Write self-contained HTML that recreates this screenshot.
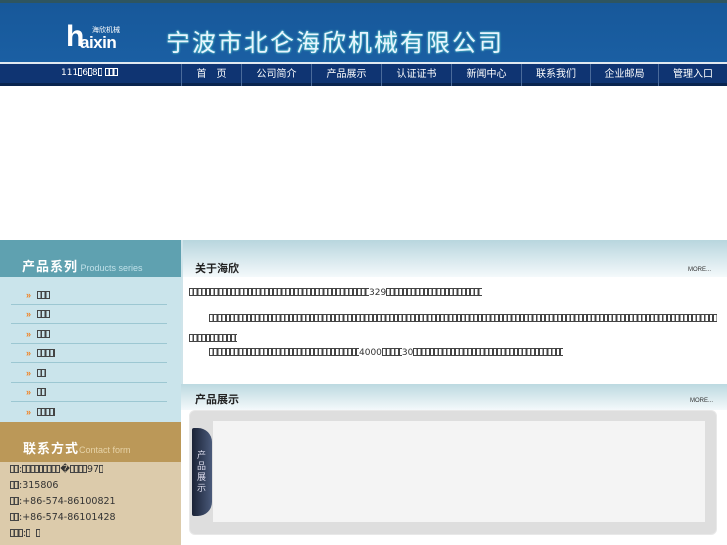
<!DOCTYPE html>
<html><head><meta charset="utf-8"><style>
*{margin:0;padding:0;box-sizing:border-box}
body{width:727px;height:545px;overflow:hidden;background:#fff;font-family:"Liberation Sans","Noto Sans CJK SC",sans-serif;position:relative}
.a{position:absolute}
.t{display:inline-block;height:8px;vertical-align:-1px;border-top:1px solid #444;border-bottom:1px solid #444;background:repeating-linear-gradient(90deg,#444 0 1px,transparent 1px 3.4px,#444 3.4px 4.2px)}
.w{border-color:#fff;background:repeating-linear-gradient(90deg,#fff 0 1px,transparent 1px 3.4px,#fff 3.4px 4.2px)}
.nav span.n{position:absolute;top:0;height:22px;line-height:22px;color:#fff;font-size:10px;text-align:center;border-left:1px solid #4a6a9a}
.li{position:absolute;left:11px;width:156px;height:19px;border-bottom:1px solid #9cc7d2;font-size:10px}
.li b{position:absolute;left:15px;top:4px;color:#f08020;font-size:9px}
.li .t{position:absolute;left:26px;top:5px}
.ct{position:absolute;left:10px;font-size:9.5px;color:#333;font-family:"DejaVu Sans",sans-serif}
</style></head><body>
<div class="a" style="left:0;top:0;width:727px;height:3px;background:#2e5560"></div>
<div class="a" style="left:0;top:3px;width:727px;height:59px;background:linear-gradient(#17589a,#1a5fa3)"></div>
<div class="a" style="left:66px;top:22px;color:#fff;font:bold 30px 'Liberation Sans',sans-serif;line-height:30px">h</div>
<div class="a" style="left:80px;top:33px;color:#fff;font:bold 17px 'Liberation Sans',sans-serif;letter-spacing:-0.5px">aixin</div>
<div class="a" style="left:92px;top:25px;color:#fff;font-size:7px">海欣机械</div>
<div class="a" style="left:166px;top:23px;color:#e8f4ff;font-size:24px;letter-spacing:2px;text-shadow:0 0 2px #7fd">宁波市北仑海欣机械有限公司</div>
<div class="a" style="left:0;top:62px;width:727px;height:2px;background:#e0e8f0"></div>
<div class="a nav" style="left:0;top:64px;width:727px;height:22px;background:#0f3472;border-bottom:3px solid #09244f">
<div class="a" style="left:61px;top:4px;color:#fff;font-size:9px;font-family:'DejaVu Sans',sans-serif">111<span class="t w" style="width:4px"></span>6<span class="t w" style="width:4px"></span>8<span class="t w" style="width:4px"></span> <span class="t w" style="width:13px"></span></div>
<span class="n" style="left:181px;width:60px">首　页</span>
<span class="n" style="left:241px;width:70px">公司简介</span>
<span class="n" style="left:311px;width:70px">产品展示</span>
<span class="n" style="left:381px;width:70px">认证证书</span>
<span class="n" style="left:451px;width:70px">新闻中心</span>
<span class="n" style="left:521px;width:69px">联系我们</span>
<span class="n" style="left:590px;width:68px">企业邮局</span>
<span class="n" style="left:658px;width:69px">管理入口</span>
</div>
<!-- left -->
<div class="a" style="left:0;top:240px;width:181px;height:37px;background:#5fa1b0"></div>
<div class="a" style="left:22px;top:256px;color:#fff;font-size:13px;font-weight:bold;letter-spacing:1px">产品系列<span style="font-size:9px;font-weight:normal;color:#bfe0e8;letter-spacing:0"> Products series</span></div>
<div class="a" style="left:0;top:277px;width:181px;height:145px;background:#cae4eb"></div>
<div class="li" style="top:286px"><b>»</b><span class="t" style="width:13px"></span></div>
<div class="li" style="top:305px"><b>»</b><span class="t" style="width:13px"></span></div>
<div class="li" style="top:325px"><b>»</b><span class="t" style="width:13px"></span></div>
<div class="li" style="top:344px"><b>»</b><span class="t" style="width:18px"></span></div>
<div class="li" style="top:364px"><b>»</b><span class="t" style="width:9px"></span></div>
<div class="li" style="top:383px"><b>»</b><span class="t" style="width:9px"></span></div>
<div class="li" style="top:403px;border:none"><b>»</b><span class="t" style="width:18px"></span></div>
<div class="a" style="left:0;top:422px;width:181px;height:40px;background:#bb9858"></div>
<div class="a" style="left:23px;top:438px;color:#fff;font-size:13px;font-weight:bold;letter-spacing:1px">联系方式<span style="font-size:9px;font-weight:normal;color:#e6d3a8;letter-spacing:0">Contact form</span></div>
<div class="a" style="left:0;top:462px;width:181px;height:83px;background:#dccbab"></div>
<div class="ct" style="top:464px"><span class="t" style="width:9px"></span>:<span class="t" style="width:38px"></span>�<span class="t" style="width:17px"></span>97<span class="t" style="width:4px"></span></div>
<div class="ct" style="top:480px"><span class="t" style="width:9px"></span>:315806</div>
<div class="ct" style="top:496px"><span class="t" style="width:9px"></span>:+86-574-86100821</div>
<div class="ct" style="top:512px"><span class="t" style="width:9px"></span>:+86-574-86101428</div>
<div class="ct" style="top:528px"><span class="t" style="width:13px"></span>:<span class="t" style="width:4px"></span> &nbsp;<span class="t" style="width:4px"></span></div>
<!-- right -->
<div class="a" style="left:181px;top:240px;width:546px;height:37px;background:linear-gradient(#b8d6de,#f4f9fb)"></div>
<div class="a" style="left:181px;top:240px;width:2px;height:145px;background:#cfe4ea"></div>
<div class="a" style="left:195px;top:260px;font-size:11px;font-weight:bold;color:#222">关于海欣</div>
<div class="a" style="left:688px;top:267px;font-size:6px;color:#333">MORE...</div>
<div class="a" style="left:189px;top:288px;font-size:9px;color:#333;font-family:'DejaVu Sans',sans-serif"><span class="t" style="width:180px"></span>329<span class="t" style="width:96px"></span></div>
<div class="a" style="left:209px;top:308px"><span class="t" style="width:508px"></span></div>
<div class="a" style="left:189px;top:328px"><span class="t" style="width:48px"></span></div>
<div class="a" style="left:209px;top:348px;font-size:9px;color:#333;font-family:'DejaVu Sans',sans-serif"><span class="t" style="width:150px"></span>4000<span class="t" style="width:20px"></span>30<span class="t" style="width:150px"></span></div>
<div class="a" style="left:181px;top:384px;width:546px;height:26px;background:linear-gradient(#bcd9e0,#f4f9fb)"></div>
<div class="a" style="left:195px;top:391px;font-size:11px;font-weight:bold;color:#222">产品展示</div>
<div class="a" style="left:690px;top:398px;font-size:6px;color:#333">MORE...</div>
<div class="a" style="left:189px;top:410px;width:528px;height:125px;background:#dedede;border-radius:6px;border:1px solid #e8e8e8"></div>
<div class="a" style="left:213px;top:421px;width:492px;height:101px;background:#f4f4f4"></div>
<div class="a" style="left:192px;top:428px;width:20px;height:88px;background:linear-gradient(90deg,#1a2236,#4a5a7a);border-radius:2px 14px 14px 2px"></div>
<div class="a" style="left:197px;top:450px;width:10px;font-size:9px;line-height:11px;color:#dde">产品展示</div>
</body></html>
